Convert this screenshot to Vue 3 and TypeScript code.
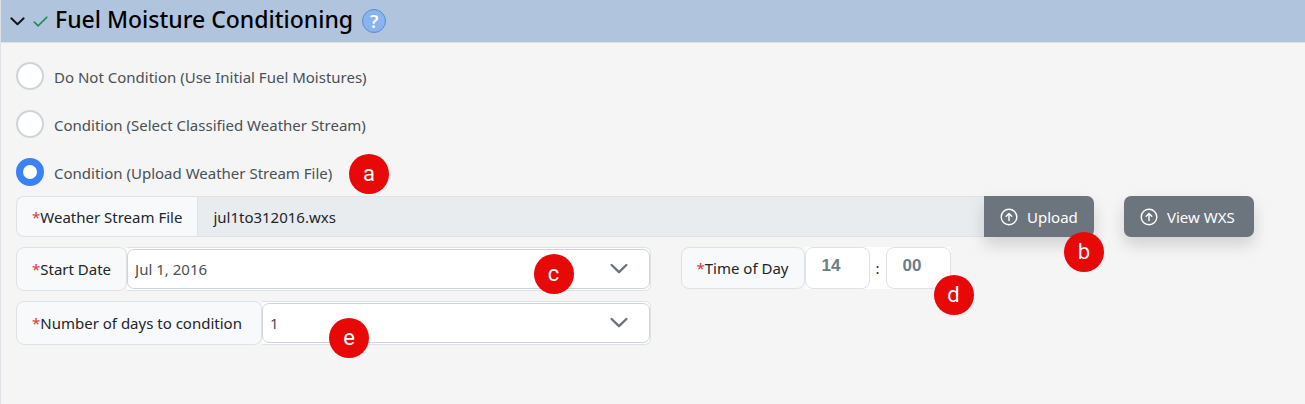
<script setup lang="ts">
import { ref } from 'vue'

type Mode = 'none' | 'classified' | 'upload'

const modes: { value: Mode; label: string; note?: string }[] = [
  { value: 'none', label: 'Do Not Condition (Use Initial Fuel Moistures)' },
  { value: 'classified', label: 'Condition (Select Classified Weather Stream)' },
  { value: 'upload', label: 'Condition (Upload Weather Stream File)', note: 'a' },
]

const mode = ref<Mode>('upload')
const fileName = ref('jul1to312016.wxs')
const startDate = ref('Jul 1, 2016')
const days = ref('1')
const hour = ref('14')
const minute = ref('00')
</script>

<template>
  <section class="panel">
    <header class="panel-header">
      <button class="toggle" type="button" aria-label="Collapse section">
        <svg width="16" height="16" viewBox="0 0 16 16" fill="none" stroke="#111" stroke-width="1.9" stroke-linecap="round" stroke-linejoin="round">
          <path d="M2.3 5.3 8.5 11.2 14.7 5.3" />
        </svg>
      </button>
      <svg class="check" width="16" height="16" viewBox="0 0 16 16" fill="none" stroke="#198754" stroke-width="1.6" stroke-linecap="round" stroke-linejoin="round">
        <path d="M2.2 9 6.2 12.8 14.8 4.2" />
      </svg>
      <h2 class="title">Fuel Moisture Conditioning</h2>
      <button class="help" type="button" aria-label="Help">?</button>
    </header>

    <div class="panel-body">
      <div class="modes" role="radiogroup" aria-label="Conditioning">
        <label v-for="m in modes" :key="m.value" class="mode">
          <input v-model="mode" class="radio" type="radio" name="mode" :value="m.value" />
          <span class="mode-text">{{ m.label }}</span>
          <span v-if="m.note" class="note note-a">{{ m.note }}</span>
        </label>
      </div>

      <div class="row file-row">
        <div class="group file-group">
          <label class="addon addon-file" for="file"><span class="req">*</span>Weather Stream File</label>
          <input id="file" v-model="fileName" class="file" type="text" readonly />
          <button class="btn btn-joined" type="button">
            <svg width="18" height="18" viewBox="0 0 18 18" fill="none" stroke="currentColor" stroke-width="1.4" stroke-linecap="round" stroke-linejoin="round">
              <circle cx="9" cy="9" r="7.8" />
              <path d="M9 12.6V5.7M6.2 8.3 9 5.5l2.8 2.8" />
            </svg>
            Upload
          </button>
          <span class="note note-b">b</span>
        </div>
        <button class="btn btn-view" type="button">
          <svg width="18" height="18" viewBox="0 0 18 18" fill="none" stroke="currentColor" stroke-width="1.4" stroke-linecap="round" stroke-linejoin="round">
            <circle cx="9" cy="9" r="7.8" />
            <path d="M9 12.6V5.7M6.2 8.3 9 5.5l2.8 2.8" />
          </svg>
          View WXS
        </button>
      </div>

      <div class="row">
        <div class="group half">
          <label class="addon" for="start"><span class="req">*</span>Start Date</label>
          <div class="select-box">
            <select id="start" v-model="startDate" class="select">
              <option>Jul 1, 2016</option>
            </select>
            <svg class="chevron" width="20" height="20" viewBox="0 0 20 20" fill="none" stroke="#6c757d" stroke-width="2.4" stroke-linecap="round" stroke-linejoin="round">
              <path d="M2.6 6 10 13.2 17.4 6" />
            </svg>
          </div>
          <span class="note note-c">c</span>
        </div>
        <div class="group time-group">
          <label class="addon" for="hour"><span class="req">*</span>Time of Day</label>
          <div class="time">
            <input id="hour" v-model="hour" class="time-part" type="text" />
            <span class="colon">:</span>
            <input v-model="minute" class="time-part" type="text" aria-label="Minutes" />
          </div>
          <span class="note note-d">d</span>
        </div>
      </div>

      <div class="row">
        <div class="group half">
          <label class="addon addon-days" for="days"><span class="req">*</span>Number of days to condition</label>
          <div class="select-box">
            <select id="days" v-model="days" class="select">
              <option>1</option>
            </select>
            <svg class="chevron" width="20" height="20" viewBox="0 0 20 20" fill="none" stroke="#6c757d" stroke-width="2.4" stroke-linecap="round" stroke-linejoin="round">
              <path d="M2.6 6 10 13.2 17.4 6" />
            </svg>
          </div>
          <span class="note note-e">e</span>
        </div>
      </div>
    </div>
  </section>
</template>

<style>
body {
  background: #f5f5f5;
}
</style>

<style scoped>
.panel {
  box-sizing: border-box;
  min-height: 100vh;
  border-left: 1px solid #dee2e6;
  background: #f5f5f5;
  color: #212529;
  font-family: "Noto Sans", "Open Sans", sans-serif;
  font-size: 15px;
  line-height: 24px;
}
.panel *,
.panel *::before {
  box-sizing: border-box;
}
button,
input,
select {
  margin: 0;
  font: inherit;
}
.panel-header {
  display: flex;
  align-items: center;
  height: 43px;
  padding: 0 8px;
  border-bottom: 1px solid #dee2e6;
  background: #b0c4de;
}
.toggle {
  display: flex;
  padding: 0;
  border: 0;
  background: none;
}
.check {
  margin: 0 7px;
}
.title {
  margin: 0 9px 4px 0;
  color: #000;
  font-size: 23px;
  font-weight: 500;
  line-height: 30px;
}
.help {
  width: 24px;
  height: 24px;
  padding: 0;
  border: 1px solid #5b8bd0;
  border-radius: 50%;
  background: #8ab4f0;
  color: #fff;
  font-size: 18px;
  font-weight: 600;
  line-height: 20px;
}
.panel-body {
  display: flex;
  flex-direction: column;
  gap: 10px;
  padding: 19px 0 20px 15px;
}
.modes {
  display: flex;
  flex-direction: column;
  align-items: flex-start;
  gap: 20px;
}
.mode {
  position: relative;
  display: flex;
  align-items: center;
  gap: 10px;
  color: #495057;
}
.mode-text {
  padding-top: 2px;
}
.radio {
  width: 28px;
  height: 28px;
  border: 2px solid #ced4da;
  border-radius: 50%;
  background: #fff;
  appearance: none;
}
.radio:checked {
  border: 7px solid #3b82f6;
}
.row {
  display: flex;
  align-items: flex-start;
  gap: 30px;
}
.file-row {
  padding-right: 51px;
}
.group {
  position: relative;
  display: flex;
}
.file-group {
  flex: 1;
}
.half {
  width: calc(50% - 10px);
}
.addon {
  display: flex;
  align-items: center;
  padding: 0 15px;
  border: 1px solid #dee2e6;
  border-radius: 8px;
  background: #f8f9fa;
  white-space: nowrap;
}
.addon-file {
  border-right: 0;
  border-radius: 8px 0 0 8px;
}
.addon-days {
  min-width: 246px;
}
.req {
  color: #dc3545;
}
.file {
  flex: 1;
  min-width: 0;
  padding: 0 15px;
  border: 1px solid #dee2e6;
  border-right: 0;
  border-radius: 0;
  background: #e9ecef;
  color: #212529;
}
.btn {
  display: flex;
  align-items: center;
  gap: 9px;
  height: 41px;
  padding: 0 16px;
  border: 0;
  border-radius: 7px;
  background: #6c757d;
  box-shadow: 0 8px 16px rgba(0, 0, 0, 0.15);
  color: #fff;
  white-space: nowrap;
}
.btn-joined {
  min-width: 110px;
  border-radius: 0 7px 7px 0;
}
.btn-view {
  min-width: 130px;
}
.select-box {
  position: relative;
  flex: 1;
  padding: 1px 0;
  border: 1px solid #dee2e6;
  border-left: 0;
  border-radius: 0 6px 6px 0;
  background: #fff;
}
.select {
  display: block;
  width: 100%;
  height: 40px;
  padding: 0 60px 0 7px;
  border: 1px solid #ced4da;
  border-radius: 7px;
  background: #fff;
  color: #495057;
  appearance: none;
}
.chevron {
  position: absolute;
  top: 11px;
  right: 21px;
  pointer-events: none;
}
.time {
  display: flex;
  align-items: center;
  background: #fff;
}
.time-part {
  width: 65px;
  height: 42px;
  padding: 0 16px 5px;
  border: 1px solid #dee2e6;
  border-radius: 8px;
  background: #fff;
  color: #6c7d86;
  font-family: "Liberation Sans", sans-serif;
  font-size: 17px;
  font-weight: 700;
}
.colon {
  width: 16px;
  text-align: center;
}
.note {
  position: absolute;
  display: flex;
  align-items: center;
  justify-content: center;
  width: 40px;
  height: 40px;
  border-radius: 50%;
  background: #e90808;
  color: #fff;
  font-family: Roboto, "Liberation Sans", sans-serif;
  font-size: 22px;
}
.note-a {
  top: -4px;
  left: 333px;
}
.note-b {
  right: -10px;
  bottom: -35px;
}
.note-c {
  top: 7px;
  right: 77px;
}
.note-d {
  right: -23px;
  bottom: -26px;
}
.note-e {
  top: 17px;
  left: 313px;
}
</style>
